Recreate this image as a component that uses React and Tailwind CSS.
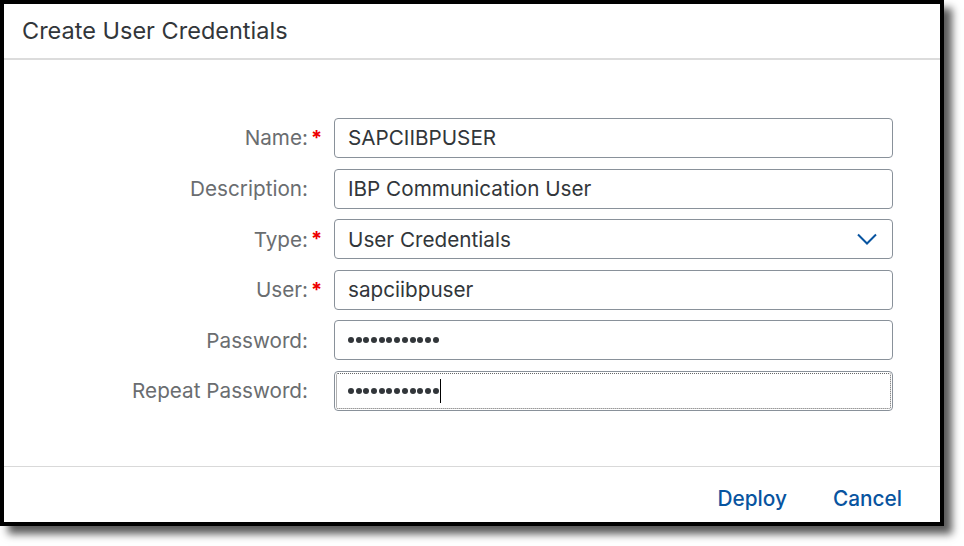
const fields = [
  { label: 'Name:', required: true, value: 'SAPCIIBPUSER' },
  { label: 'Description:', required: false, value: 'IBP Communication User' },
  { label: 'Type:', required: true, value: 'User Credentials', select: true },
  { label: 'User:', required: true, value: 'sapciibpuser' },
  { label: 'Password:', required: false, dots: 12 },
  { label: 'Repeat Password:', required: false, dots: 12, focused: true },
];

function Dots({ count }) {
  return (
    <div className="flex items-center gap-[1.7px]">
      {Array.from({ length: count }).map((_, i) => (
        <span key={i} className="w-[6px] h-[6px] rounded-full bg-[#32363a]" />
      ))}
    </div>
  );
}

function Chevron() {
  return (
    <svg
      className="absolute right-[15px] top-1/2 -translate-y-1/2"
      width="20"
      height="12"
      viewBox="0 0 20 12"
      fill="none"
      stroke="#0854a0"
      strokeWidth="2"
    >
      <polyline points="1,1.5 10,10.5 19,1.5" />
    </svg>
  );
}

function Field({ field }) {
  return (
    <>
      {/* Label column with reserved space for the required asterisk */}
      <div className="flex items-center justify-end h-[40px] text-[20.7px] text-[#6a6d70]">
        <span>{field.label}</span>
        <span className="w-[14px] pl-[3px] text-[#e00] font-bold text-[20px] leading-none">
          {field.required ? '*' : ''}
        </span>
      </div>
      <div
        className={`relative flex items-center h-[40px] px-[13px] border border-[#89919a] rounded-[4px] bg-white text-[20.7px] text-[#32363a] ${
          field.focused ? 'outline-1 outline-dotted outline-[#666] outline-offset-[-3px]' : ''
        }`}
      >
        {field.dots ? (
          <div className="flex items-center">
            <Dots count={field.dots} />
            {field.focused && <span className="ml-[1px] w-px h-[24px] bg-[#000]" />}
          </div>
        ) : (
          <span>{field.value}</span>
        )}
        {field.select && <Chevron />}
      </div>
    </>
  );
}

export default function App() {
  return (
    <div className="w-[964px] h-[546px] bg-white" style={{ fontFamily: 'Inter, "Open Sans", sans-serif' }}>
      <div className="w-[944px] h-[526px] border-4 border-black bg-white flex flex-col shadow-[8px_8px_8px_rgba(0,0,0,0.65)]">
        {/* Header */}
        <div className="h-[56px] flex items-center px-[18px] border-b-2 border-[#dcdcdc] shrink-0">
          <h1 className="text-[23.5px] text-[#32363a]">Create User Credentials</h1>
        </div>

        {/* Form */}
        <div className="flex-1 pt-[58px]">
          <div className="grid grid-cols-[318px_559px] gap-x-[12px] gap-y-[10.6px]">
            {fields.map((f) => (
              <Field key={f.label} field={f} />
            ))}
          </div>
        </div>

        {/* Footer */}
        <div className="h-[56px] flex items-center justify-end gap-[46px] pr-[38px] pt-[9px] border-t border-[#d9d9d9] shrink-0">
          <button className="text-[20.8px] font-medium text-[#0854a0]">Deploy</button>
          <button className="text-[20.8px] font-medium text-[#0854a0]">Cancel</button>
        </div>
      </div>
    </div>
  );
}
